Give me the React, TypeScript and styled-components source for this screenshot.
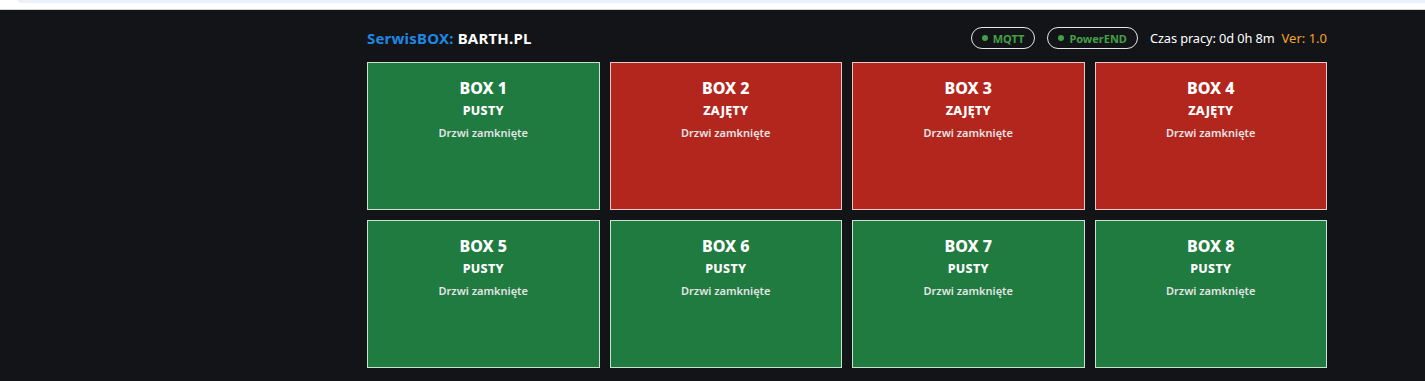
import styled, { createGlobalStyle } from "styled-components";

const GlobalStyle = createGlobalStyle`
  html, body {
    margin: 0;
    padding: 0;
    background: #131418;
    font-family: "Noto Sans", "Open Sans", sans-serif;
  }
`;

type BoxData = {
  id: number;
  busy: boolean;
};

const boxes: BoxData[] = [
  { id: 1, busy: false },
  { id: 2, busy: true },
  { id: 3, busy: true },
  { id: 4, busy: true },
  { id: 5, busy: false },
  { id: 6, busy: false },
  { id: 7, busy: false },
  { id: 8, busy: false },
];

const TopStrip = styled.div`
  height: 9px;
  background: #ffffff;
  border-bottom: 1px solid #d6d6d6;
  padding-left: 18px;
`;
const TopTab = styled.div`
  height: 3px;
  background: #ebf1fb;
  border-bottom-left-radius: 6px;
`;
const Page = styled.div`
  min-height: 371px;
  background: #131418;
  padding-left: 367px;
`;
const Wrapper = styled.div`
  width: 960px;
  padding-top: 16px;
`;
const Header = styled.div`
  display: flex;
  align-items: center;
  justify-content: space-between;
  height: 24px;
  margin-bottom: 12px;
`;
const Title = styled.div`
  font-size: 15px;
  font-weight: 700;
  letter-spacing: 0.2px;
  color: #ffffff;
  span {
    color: #1e88e5;
  }
`;
const Status = styled.div`
  display: flex;
  align-items: center;
`;
const Pill = styled.div`
  display: flex;
  align-items: center;
  gap: 5px;
  height: 20px;
  padding: 0 10px 0 10px;
  border: 1px solid #e6e6e6;
  border-radius: 11px;
  color: #43a047;
  font-size: 11px;
  font-weight: 700;
  margin-right: 12px;
`;
const Dot = styled.span`
  width: 6px;
  height: 6px;
  border-radius: 50%;
  background: #43a047;
`;
const Uptime = styled.div`
  color: #ffffff;
  font-size: 12.8px;
  letter-spacing: -0.1px;
`;
const Version = styled.div`
  color: #f5a524;
  font-size: 13px;
  margin-left: 7px;
`;
const Grid = styled.div`
  display: grid;
  grid-template-columns: repeat(4, 1fr);
  gap: 10px;
`;
const Card = styled.div<{ $busy: boolean }>`
  height: 148px;
  box-sizing: border-box;
  border: 1px solid ${(p) => (p.$busy ? "#e6c9c6" : "#c9e3d0")};
  background: ${(p) => (p.$busy ? "#b3261e" : "#1f7b3f")};
  display: flex;
  flex-direction: column;
  align-items: center;
  padding-top: 14px;
`;
const BoxName = styled.div`
  color: #ffffff;
  font-size: 16px;
  font-weight: 800;
  line-height: 22px;
`;
const BoxState = styled.div`
  color: #ffffff;
  font-size: 12.5px;
  font-weight: 800;
  line-height: 20px;
  letter-spacing: 0.3px;
  margin-top: 2px;
`;
const DoorState = styled.div`
  color: #e4e4e4;
  font-size: 11px;
  font-weight: 600;
  line-height: 18px;
  margin-top: 3px;
`;

const App = () => {
  return (
    <>
      <GlobalStyle />
      <TopStrip>
        <TopTab />
      </TopStrip>
      <Page>
        <Wrapper>
          <Header>
            <Title>
              <span>SerwisBOX:</span> BARTH.PL
            </Title>
            <Status>
              <Pill>
                <Dot />
                MQTT
              </Pill>
              <Pill>
                <Dot />
                PowerEND
              </Pill>
              <Uptime>Czas pracy: 0d 0h 8m</Uptime>
              <Version>Ver: 1.0</Version>
            </Status>
          </Header>
          <Grid>
            {boxes.map((b) => (
              <Card key={b.id} $busy={b.busy}>
                <BoxName>BOX {b.id}</BoxName>
                <BoxState>{b.busy ? "ZAJĘTY" : "PUSTY"}</BoxState>
                <DoorState>Drzwi zamknięte</DoorState>
              </Card>
            ))}
          </Grid>
        </Wrapper>
      </Page>
    </>
  );
};
export default App;
